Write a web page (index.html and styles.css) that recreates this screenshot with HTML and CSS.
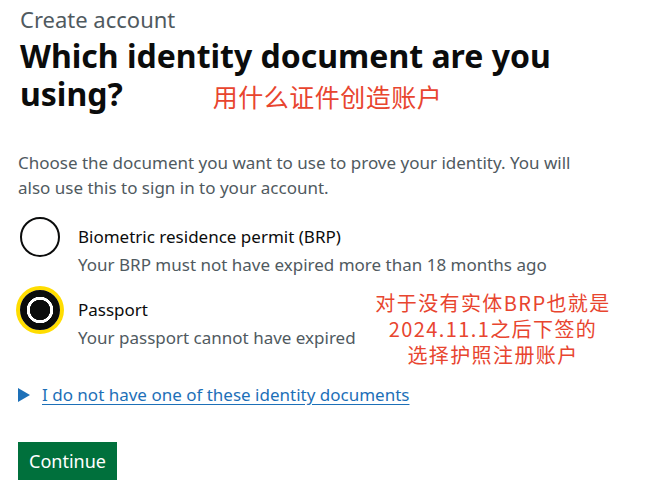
FILE: index.html
```html
<!DOCTYPE html>
<html lang="zh-CN">
<head>
    <meta charset="UTF-8">
    <meta name="viewport" content="width=device-width, initial-scale=1.0">
    <title>Create account</title>
    <link rel="stylesheet" href="styles.css">
</head>
<body>
    <main class="page">
        <span class="caption">Create account</span>
        <h1 class="heading">Which identity document are you using?<span class="note note-inline">用什么证件创造账户</span></h1>

        <p class="lead">Choose the document you want to use to prove your identity. You will also use this to sign in to your account.</p>

        <div class="choices">
            <label class="radio">
                <span class="radio-mark"></span>
                <span class="radio-text">
                    <span class="radio-label">Biometric residence permit (BRP)</span>
                    <span class="radio-hint">Your BRP must not have expired more than 18 months ago</span>
                </span>
            </label>
            <label class="radio checked">
                <span class="radio-mark"></span>
                <span class="radio-text">
                    <span class="radio-label">Passport</span>
                    <span class="radio-hint">Your passport cannot have expired</span>
                </span>
            </label>
            <!-- annotation laid over the form -->
            <p class="note note-side">对于没有实体BRP也就是<br>2024.11.1之后下签的<br>选择护照注册账户</p>
        </div>

        <div class="details">
            <span class="arrow"></span>
            <a class="details-link" href="#">I do not have one of these identity documents</a>
        </div>

        <button class="button">Continue</button>
    </main>
</body>
</html>
```

FILE: styles.css
```css
* {
    margin: 0;
    padding: 0;
    box-sizing: border-box;
}

body {
    background: #ffffff;
    color: #0b0c0c;
    font-family: "Noto Sans", "Noto Sans CJK SC", sans-serif;
}

.page {
    padding: 4px 20px 0 20px;
}

.caption {
    display: block;
    font-size: 22px;
    line-height: 30px;
    color: #505a5f;
}

.heading {
    font-size: 32px;
    line-height: 38px;
    font-weight: 700;
    width: 570px;
    margin-top: 3px;
}

.note {
    color: #e8452f;
    font-family: "Noto Sans CJK SC", sans-serif;
    font-weight: 400;
}

.note-inline {
    font-size: 25px;
    line-height: 1;
    letter-spacing: 0.5px;
    margin-left: 90px;
    vertical-align: -1px;
}

.lead {
    margin-top: 37px;
    margin-left: -2px;
    max-width: 570px;
    font-size: 17px;
    line-height: 25px;
    color: #505a5f;
}

.choices {
    position: relative;
    display: flex;
    flex-direction: column;
    gap: 12px;
    margin-top: 17px;
}

.radio {
    display: flex;
    gap: 18px;
}

.radio-mark {
    flex: none;
    width: 40px;
    height: 40px;
    border: 2px solid #0b0c0c;
    border-radius: 50%;
    background: #ffffff;
}

.checked .radio-mark {
    box-shadow: 0 0 0 4px #ffdd00;
    background: radial-gradient(circle, #0b0c0c 0, #0b0c0c 10px, #ffffff 10.5px, #ffffff 13px, #0b0c0c 13.5px);
}

.radio-text {
    display: flex;
    flex-direction: column;
    padding-top: 7px;
    white-space: nowrap;
}

.radio-label {
    font-size: 17px;
    line-height: 25px;
}

.radio-hint {
    padding-top: 3px;
    font-size: 17px;
    line-height: 26px;
    color: #505a5f;
}

.note-side {
    position: absolute;
    top: 73px;
    left: 343px;
    width: 260px;
    font-size: 20px;
    line-height: 26px;
    letter-spacing: 1.4px;
    text-align: center;
}

.details {
    display: flex;
    align-items: center;
    gap: 12px;
    margin-top: 31px;
    margin-left: -2px;
}

.arrow {
    width: 0;
    height: 0;
    border-left: 12px solid #1d70b8;
    border-top: 7px solid transparent;
    border-bottom: 7px solid transparent;
}

.details-link {
    font-size: 17px;
    line-height: 25px;
    color: #1d70b8;
    text-decoration: underline;
    text-underline-offset: 3px;
}

.button {
    display: block;
    margin-top: 35px;
    margin-left: -2px;
    padding: 8px 11px 7px;
    font-family: "Noto Sans", sans-serif;
    font-size: 18px;
    line-height: 23px;
    color: #ffffff;
    background: #00703c;
    border: none;
    box-shadow: 0 2px 0 #002d18;
}
```
